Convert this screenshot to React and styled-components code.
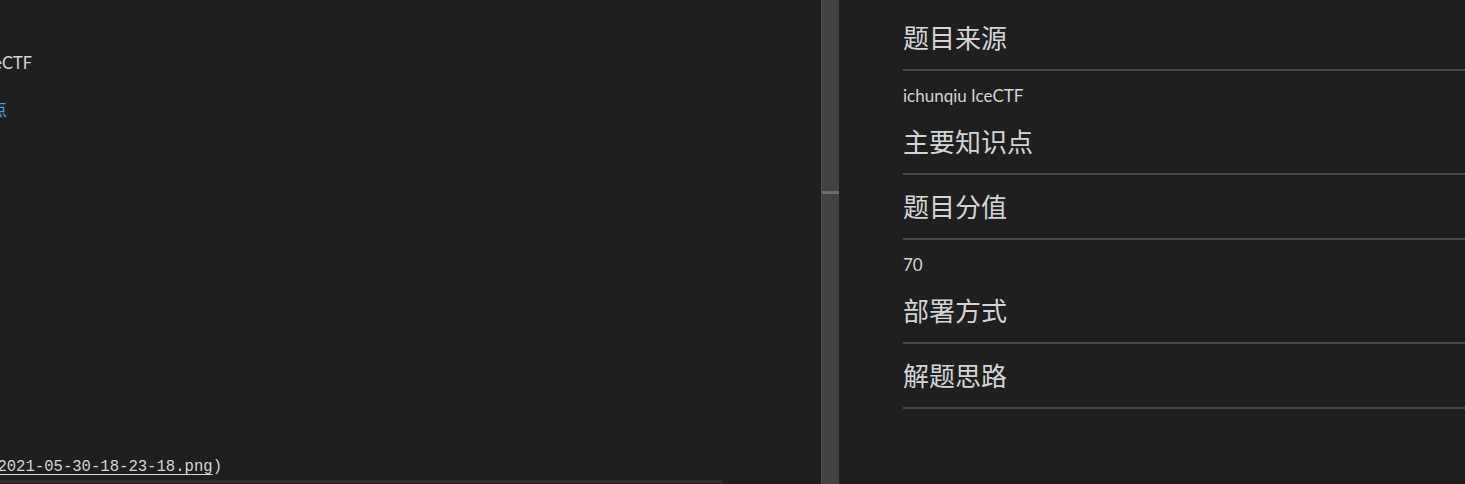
import React from "react";
import styled, { createGlobalStyle } from "styled-components";

const GlobalStyle = createGlobalStyle`
  html, body {
    margin: 0;
    padding: 0;
    background: #1f1f1f;
    overflow: hidden;
  }
`;

const Shell = styled.div`
  display: flex;
  width: 100vw;
  height: 100vh;
  background: #1f1f1f;
`;

const EditorPane = styled.div`
  width: 821px;
  flex-shrink: 0;
  display: flex;
  flex-direction: column;
`;

const Lines = styled.div`
  flex: 1;
  min-height: 0;
  overflow: hidden;
  padding-top: 51.5px;
  box-sizing: border-box;
`;

const Line = styled.div`
  height: 23.8px;
  line-height: 23.8px;
  width: ${p => p.$end || 0}px;
  display: flex;
  justify-content: flex-end;
  overflow: hidden;
  white-space: nowrap;
  color: ${p => (p.$heading ? "#4f9de0" : "#d4d4d4")};
  font-family: ${p =>
    p.$mono
      ? `"Liberation Mono", "DejaVu Sans Mono", monospace`
      : `Lato, "Noto Sans CJK SC", sans-serif`};
  font-size: ${p => (p.$mono ? "15.6px" : "16.5px")};
`;

const LinkText = styled.span`
  text-decoration: underline;
  text-underline-offset: 3px;
`;

const HScroll = styled.div`
  width: 723px;
  height: 3px;
  margin-bottom: 1px;
  background: #2f2f2f;
  flex-shrink: 0;
`;

const VScroll = styled.div`
  width: 17px;
  flex-shrink: 0;
  background: #424242;
  border-left: 1px solid #4e4e4e;
  display: flex;
  flex-direction: column;
`;

const CursorMark = styled.div`
  height: 3px;
  margin-top: 191px;
  background: #6c6c6c;
`;

const Preview = styled.div`
  flex: 1;
  min-width: 0;
  overflow: hidden;
  padding: 6px 0 0 64px;
  display: flex;
  flex-direction: column;
  color: #d4d4d4;
`;

const Heading = styled.h2`
  margin: 12.5px 0 0;
  padding-bottom: 14.5px;
  border-bottom: 2px solid #484848;
  font-family: "Noto Sans CJK SC", "Noto Sans", sans-serif;
  font-size: 26px;
  line-height: 36px;
  font-weight: 400;
  white-space: nowrap;
`;

const Para = styled.p`
  margin: 12.5px 0 2.5px;
  font-family: Lato, "Noto Sans CJK SC", sans-serif;
  font-size: 17px;
  line-height: 24px;
`;

const sections = [
  { title: "题目来源", body: "ichunqiu IceCTF" },
  { title: "主要知识点" },
  { title: "题目分值", body: "70" },
  { title: "部署方式" },
  { title: "解题思路" }
];

export default function App() {
  const blank = Array.from({ length: 14 });
  return (
    <Shell>
      <GlobalStyle />
      <EditorPane>
        <Lines>
          <Line $end={32}>ichunqiu IceCTF</Line>
          <Line />
          <Line $end={7} $heading>## 主要知识点</Line>
          {blank.map((_, i) => (
            <Line key={i} />
          ))}
          <Line $end={222} $mono>
            ![](<LinkText>assets/README-2021-05-30-18-23-18.png</LinkText>)
          </Line>
        </Lines>
        <HScroll />
      </EditorPane>
      <VScroll>
        <CursorMark />
      </VScroll>
      <Preview>
        {sections.map(s => (
          <React.Fragment key={s.title}>
            <Heading>{s.title}</Heading>
            {s.body && <Para>{s.body}</Para>}
          </React.Fragment>
        ))}
      </Preview>
    </Shell>
  );
}
